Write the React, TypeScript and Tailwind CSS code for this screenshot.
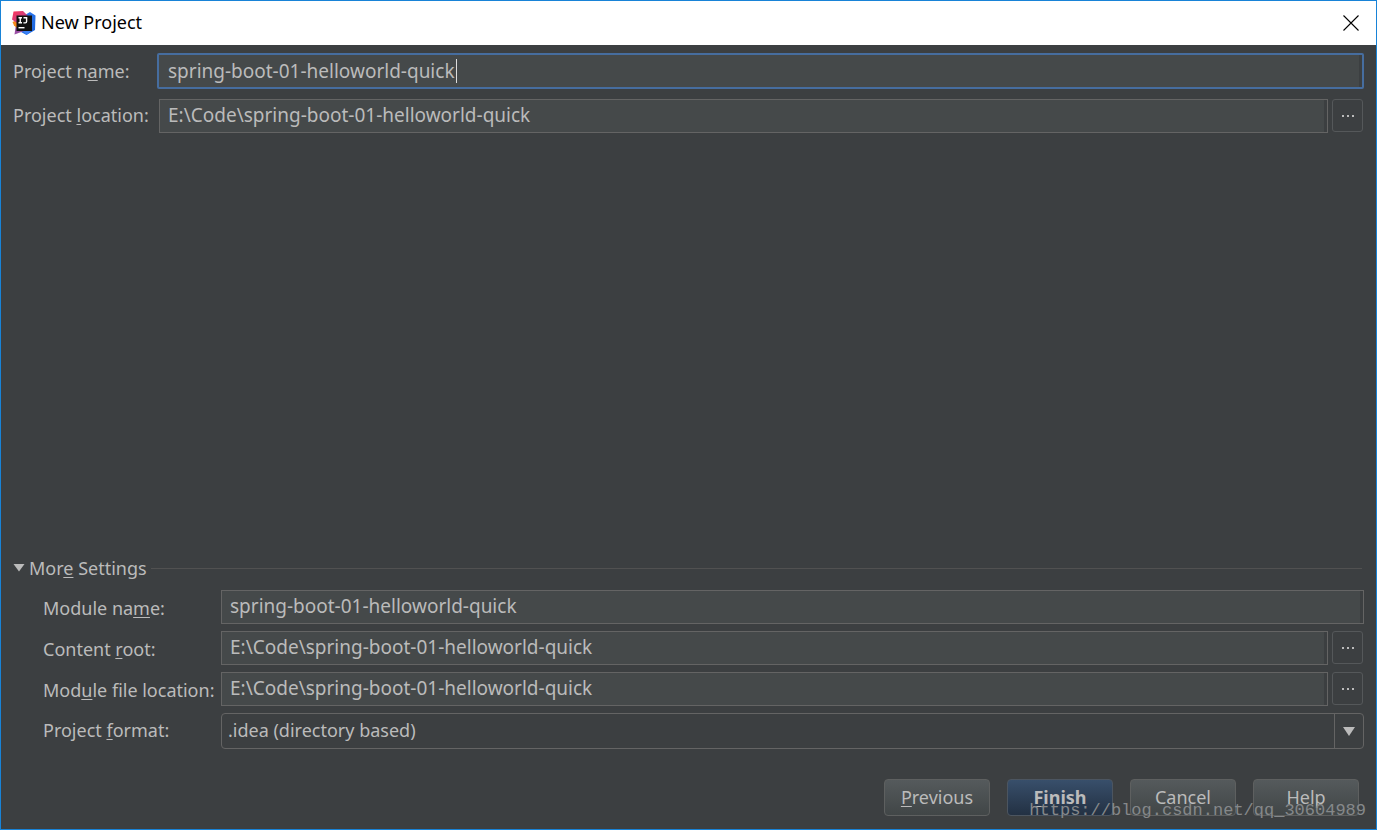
import { useState, type ReactNode } from "react";

const fieldClass =
  "h-[34px] min-w-0 flex-1 border border-[#646464] bg-[#45494a] px-2 pb-0.5 text-[19px] leading-6 text-[#bbbbbb] shadow-[inset_-3px_0_#3c3f41] outline-none";

const pushButtonClass =
  "h-[37px] w-[106px] rounded-[4px] border border-[#5e6060] bg-linear-to-b from-[#555a5c] to-[#414647] pb-0.5 text-[18px] leading-6 text-[#bbbbbb]";

function Mnemonic({ children }: { children: ReactNode }) {
  return <span className="underline decoration-1 underline-offset-2">{children}</span>;
}

function BrowseButton({ label }: { label: string }) {
  return (
    <button
      type="button"
      aria-label={label}
      className="mr-px flex h-[33px] w-[31px] items-center justify-center rounded-[3px] border border-[#55585a]"
    >
      <svg viewBox="0 0 12 2" className="h-0.5 w-3" fill="#bbbbbb" aria-hidden="true">
        <rect x="0" y="0" width="2" height="2" />
        <rect x="5" y="0" width="2" height="2" />
        <rect x="10" y="0" width="2" height="2" />
      </svg>
    </button>
  );
}

function AppLogo() {
  return (
    <svg viewBox="0 0 24 24" className="size-6" aria-hidden="true">
      <defs>
        <linearGradient id="logoPink" x1="0" y1="0" x2="1" y2="1">
          <stop offset="0" stopColor="#ff3358" />
          <stop offset="1" stopColor="#a8489a" />
        </linearGradient>
        <linearGradient id="logoBlue" x1="0" y1="0" x2="1" y2="1">
          <stop offset="0" stopColor="#2f7df5" />
          <stop offset="1" stopColor="#1b62d8" />
        </linearGradient>
      </defs>
      <path d="M13 4 18 1 23.5 4.500 23 19 14.500 24 9 21Z" fill="url(#logoBlue)" />
      <path d="M4 13 2.500 23.500 12 20Z" fill="#9a4fa5" />
      <path d="M10 19 14.500 24 19 20Z" fill="#3b82f6" />
      <path d="M0.500 11 5 9 5 17 2 14.500Z" fill="#f98a1c" />
      <path d="M1.500 0.500 11 0 16 5 5 12 0 8.500Z" fill="url(#logoPink)" />
      <rect x="4.500" y="4.500" width="15.500" height="15.500" fill="#111111" />
      <path
        d="M6.500 6.700H10M8.250 6.700V11.800M6.500 11.800H10M11.500 6.700H14.600V10.600Q14.600 11.900 13.300 11.900H11.400"
        fill="none"
        stroke="#ffffff"
        strokeWidth="1.4"
      />
      <rect x="6.500" y="16" width="6" height="1.4" fill="#ffffff" />
    </svg>
  );
}

export default function App() {
  const [projectName, setProjectName] = useState("spring-boot-01-helloworld-quick");
  const [location, setLocation] = useState("E:\\Code\\spring-boot-01-helloworld-quick");
  const [moduleName, setModuleName] = useState("spring-boot-01-helloworld-quick");
  const [contentRoot, setContentRoot] = useState("E:\\Code\\spring-boot-01-helloworld-quick");
  const [moduleFile, setModuleFile] = useState("E:\\Code\\spring-boot-01-helloworld-quick");

  return (
    <div className="relative flex min-h-screen flex-col border border-[#1883d7] bg-[#3c3f41] font-['Noto_Sans','Open_Sans',sans-serif] text-[18px] leading-6 text-[#bbbbbb]">
      <header className="flex h-11 items-center justify-between bg-white pr-[15px] pl-[11px]">
        <div className="flex items-center gap-[5px]">
          <AppLogo />
          <h1 className="pb-0.5 text-black">New Project</h1>
        </div>
        <button type="button" aria-label="Close" className="p-0.5">
          <svg viewBox="0 0 16 16" className="size-4" stroke="#000000" strokeWidth="1.1" aria-hidden="true">
            <path d="M0.500 0.500 15.500 15.500M15.500 0.500 0.500 15.500" />
          </svg>
        </button>
      </header>

      <form className="flex flex-1 flex-col px-3 pt-2 pb-[13px]" onSubmit={(e) => e.preventDefault()}>
        <div className="flex items-center">
          <label htmlFor="project-name" className="w-36 shrink-0">
            Project n<Mnemonic>a</Mnemonic>me:
          </label>
          <div className="relative flex min-w-0 flex-1">
            <input
              id="project-name"
              value={projectName}
              onChange={(e) => setProjectName(e.target.value)}
              className="h-9 min-w-0 flex-1 rounded-[2px] border-2 border-[#466d9f] bg-[#45494a] px-[9px] text-[19px] leading-6 text-[#bbbbbb] shadow-[inset_-3px_0_#3c3f41] outline-none"
            />
            <span className="absolute top-1.5 left-[299px] h-6 w-px bg-[#dddddd]" />
          </div>
        </div>

        <div className="mt-2.5 flex items-center">
          <label htmlFor="project-location" className="w-[146px] shrink-0 pb-0.5">
            Project <Mnemonic>l</Mnemonic>ocation:
          </label>
          <div className="flex min-w-0 flex-1 gap-1">
            <input
              id="project-location"
              value={location}
              onChange={(e) => setLocation(e.target.value)}
              className={fieldClass}
            />
            <BrowseButton label="Browse project location" />
          </div>
        </div>

        <div className="min-h-8 flex-1" />

        <button type="button" aria-expanded="true" className="flex items-center">
          <svg viewBox="0 0 12 8" className="h-2 w-3" fill="#bbbbbb" aria-hidden="true">
            <path d="M0.500 0H11.500L6 7.500Z" />
          </svg>
          <span className="ml-1">
            Mor<Mnemonic>e</Mnemonic> Settings
          </span>
          <span className="mr-0.5 ml-1 h-px flex-1 bg-[#515151]" />
        </button>

        <div className="mt-2.5 grid grid-cols-[178px_minmax(0,1fr)] items-center gap-y-[7px] pl-[30px]">
          <label htmlFor="module-name" className="pt-0.5">
            Module na<Mnemonic>m</Mnemonic>e:
          </label>
          <div className="flex">
            <input
              id="module-name"
              value={moduleName}
              onChange={(e) => setModuleName(e.target.value)}
              className={fieldClass}
            />
          </div>

          <label htmlFor="content-root" className="pt-0.5">
            Content <Mnemonic>r</Mnemonic>oot:
          </label>
          <div className="flex gap-1">
            <input
              id="content-root"
              value={contentRoot}
              onChange={(e) => setContentRoot(e.target.value)}
              className={fieldClass}
            />
            <BrowseButton label="Browse content root" />
          </div>

          <label htmlFor="module-file" className="pt-0.5 whitespace-nowrap">
            Mod<Mnemonic>u</Mnemonic>le file location:
          </label>
          <div className="flex gap-1">
            <input
              id="module-file"
              value={moduleFile}
              onChange={(e) => setModuleFile(e.target.value)}
              className={fieldClass}
            />
            <BrowseButton label="Browse module file location" />
          </div>

          <label htmlFor="project-format" className="pb-0.5">
            Project <Mnemonic>f</Mnemonic>ormat:
          </label>
          <div className="relative flex">
            <select
              id="project-format"
              className="h-9 min-w-0 flex-1 appearance-none rounded-[4px] border border-[#646464] bg-[#3c3f41] pr-8 pb-0.5 pl-1.5 text-[18px] leading-6 text-[#bbbbbb] outline-none"
            >
              <option>.idea (directory based)</option>
              <option>.ipr (file based)</option>
            </select>
            <span className="pointer-events-none absolute inset-y-px right-0.5 flex w-7 items-center justify-center border-l border-[#646464]">
              <svg viewBox="0 0 12 9" className="h-[9px] w-3" fill="#bbbbbb" aria-hidden="true">
                <path d="M0 0H12L6 9Z" />
              </svg>
            </span>
          </div>
        </div>

        <div className="mt-[30px] flex justify-end gap-[17px] pr-[5px]">
          <button type="button" className={pushButtonClass}>
            <Mnemonic>P</Mnemonic>revious
          </button>
          <button
            type="submit"
            className="h-[37px] w-[106px] rounded-[4px] border border-[#4c5560] bg-linear-to-b from-[#384f6b] to-[#233143] pb-0.5 text-[18px] leading-6 font-bold text-[#bbbbbb]"
          >
            <Mnemonic>F</Mnemonic>inish
          </button>
          <button type="button" className={pushButtonClass}>
            Cancel
          </button>
          <button type="button" className={pushButtonClass}>
            Help
          </button>
        </div>
      </form>

      <p className="pointer-events-none absolute right-2.5 bottom-1.5 font-['Liberation_Mono',monospace] text-[17px] leading-6 text-[#85888a]">
        https://blog.csdn.net/qq_30604989
      </p>
    </div>
  );
}
